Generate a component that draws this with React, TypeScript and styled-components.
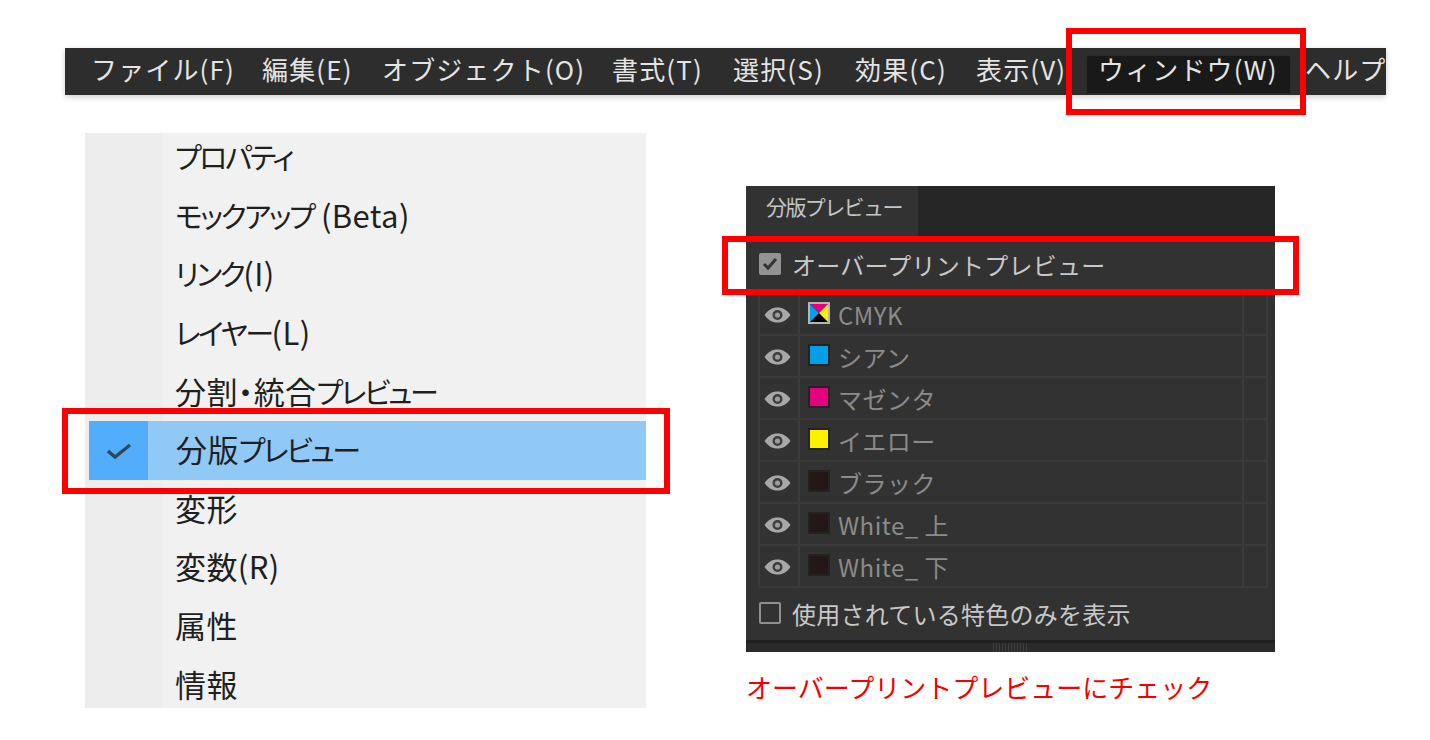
import styled, { createGlobalStyle } from 'styled-components';

const GlobalStyle = createGlobalStyle`
  html, body {
    margin: 0;
    padding: 0;
    background: #ffffff;
  }
  body {
    font-family: "Noto Sans CJK JP", "Noto Sans", sans-serif;
  }
`;

const Page = styled.div`
  width: 1430px;
  height: 740px;
  padding: 48px 44px 0 65px;
  box-sizing: border-box;
  overflow: hidden;
`;

const MenuBar = styled.nav`
  position: relative;
  height: 47px;
  padding-left: 12px;
  background: #2d2d2d;
  box-shadow: 0 2px 6px rgba(0, 0, 0, 0.2);
`;

const MenuBarClip = styled.div`
  display: flex;
  align-items: flex-start;
  padding-top: 7px;
  box-sizing: border-box;
  height: 100%;
  width: 100%;
  overflow: hidden;
`;

const BarItem = styled.div<{ $active?: boolean; $width: number }>`
  flex: none;
  box-sizing: border-box;
  width: ${p => p.$width}px;
  height: 39px;
  line-height: ${p => (p.$active ? 25 : 27)}px;
  padding-left: ${p => (p.$active ? 11 : 14)}px;
  font-size: 26px;
  letter-spacing: 1.15px;
  white-space: nowrap;
  color: #e4e4e4;
  background: ${p => (p.$active ? '#191919' : 'transparent')};
  border: ${p => (p.$active ? '1px solid #2a2a2a' : 'none')};
  border-radius: ${p => (p.$active ? '3px 3px 0 0' : '0')};
`;

const Highlight = styled.div<{ $top: number; $left: number; $width: number; $height: number }>`
  position: absolute;
  top: ${p => p.$top}px;
  left: ${p => p.$left}px;
  width: ${p => p.$width}px;
  height: ${p => p.$height}px;
  box-sizing: border-box;
  border: 6px solid #ff0000;
  pointer-events: none;
`;

const Content = styled.div`
  display: flex;
  align-items: flex-start;
  margin-top: 38px;
  padding-left: 20px;
`;

const DropMenu = styled.ul`
  position: relative;
  flex: none;
  width: 561px;
  height: 575px;
  margin: 0;
  padding: 0;
  list-style: none;
  background: linear-gradient(to right, #ededed 0, #ededed 78px, #f1f1f1 78px);
`;

const DropItem = styled.li<{ $selected?: boolean }>`
  position: relative;
  display: flex;
  align-items: center;
  box-sizing: border-box;
  height: 58.6px;
  margin-left: ${p => (p.$selected ? 4 : 0)}px;
  padding-left: ${p => (p.$selected ? 87 : 90)}px;
  padding-bottom: 4px;
  font-size: 31px;
  font-feature-settings: "palt";
  letter-spacing: 0.4px;
  white-space: pre;
  color: #1f1f1f;
  background: ${p => (p.$selected ? '#90c8f6' : 'transparent')};

  &:first-child {
    margin-top: -4.5px;
  }
`;

const Kana = styled.span`
  font-size: 29px;
  letter-spacing: -2.4px;
`;

const CheckCell = styled.span`
  position: absolute;
  left: 0;
  top: 0;
  bottom: 0;
  width: 59px;
  display: flex;
  align-items: center;
  justify-content: center;
  background: #52aefc;
`;

const RightColumn = styled.div`
  flex: none;
  margin: 53px 0 0 100px;
  width: 529px;
`;

const Panel = styled.section`
  position: relative;
  background: #323232;
  color: #c6c6c6;
`;

const TabStrip = styled.div`
  height: 50px;
  background: #262626;
`;

const Tab = styled.div`
  box-sizing: border-box;
  width: 172px;
  height: 50px;
  padding-left: 20px;
  line-height: 40px;
  font-size: 21px;
  letter-spacing: -1.6px;
  color: #c4c4c4;
  background: #323232;
`;

const OptionRow = styled.label<{ $height: number }>`
  display: flex;
  align-items: center;
  gap: 11px;
  height: ${p => p.$height}px;
  padding-left: 13px;
  padding-bottom: 2px;
  box-sizing: border-box;
  font-size: 24px;
  letter-spacing: 0.25px;
  color: #c8c8c8;
`;

const CheckBox = styled.span<{ $checked?: boolean }>`
  flex: none;
  display: flex;
  align-items: center;
  justify-content: center;
  box-sizing: border-box;
  width: 22px;
  height: 22px;
  border-radius: 2px;
  border: 2px solid ${p => (p.$checked ? '#939393' : '#8f8f8f')};
  background: ${p => (p.$checked ? '#939393' : 'transparent')};
`;

const SeparationTable = styled.div`
  margin: 0 7px 0 12px;
  border: 2px solid #3b3b3b;
  border-top: none;
  border-radius: 0 0 2px 2px;
`;

const SeparationRow = styled.div`
  display: grid;
  grid-template-columns: 40px 1fr 22px;
  height: 42px;
  box-sizing: border-box;
  border-bottom: 2px solid #3b3b3b;

  &:last-child {
    height: 40px;
    border-bottom: none;
  }
`;

const EyeCell = styled.div`
  display: flex;
  align-items: center;
  justify-content: center;
  padding: 2px 3px 0 0;
  border-right: 2px solid #3b3b3b;
`;

const NameCell = styled.div`
  display: flex;
  align-items: center;
  gap: 8px;
  padding-left: 8px;
  font-size: 24px;
  letter-spacing: 0.5px;
  color: #8b8b8b;
  border-right: 2px solid #3b3b3b;
`;

const Swatch = styled.span<{ $color: string }>`
  flex: none;
  box-sizing: border-box;
  width: 22px;
  height: 22px;
  margin-top: -2px;
  border: 2px solid #232323;
  background: ${p => p.$color};
`;

const CmykMark = styled.svg`
  flex: none;
  margin-top: -2px;
`;

const ResizeStrip = styled.div`
  display: flex;
  justify-content: center;
  height: 12px;
  background: #2a2a2a;
  border-top: 3px solid #202020;
  box-sizing: border-box;
`;

const Grip = styled.div`
  width: 36px;
  height: 100%;
  background: repeating-linear-gradient(to right, #3f3f3f 0, #3f3f3f 1px, transparent 1px, transparent 3px);
`;

const Caption = styled.p`
  margin: 15px 0 0;
  font-size: 26px;
  line-height: 40px;
  white-space: nowrap;
  color: #f50000;
`;

const barItems = [
  { label: 'ファイル(F)', width: 171 },
  { label: '編集(E)', width: 120 },
  { label: 'オブジェクト(O)', width: 230 },
  { label: '書式(T)', width: 121 },
  { label: '選択(S)', width: 122 },
  { label: '効果(C)', width: 121 },
  { label: '表示(V)', width: 124 },
  { label: 'ウィンドウ(W)', width: 205, active: true },
  { label: 'ヘルプ', width: 100 },
];

const dropItems = [
  'プロパティ',
  'モックアップ (Beta)',
  'リンク(I)',
  'レイヤー(L)',
  '分割・統合プレビュー',
  '分版プレビュー',
  '変形',
  '変数(R)',
  '属性',
  '情報',
];

const separations = [
  { name: 'CMYK', color: 'cmyk' },
  { name: 'シアン', color: '#009fe8' },
  { name: 'マゼンタ', color: '#e5007f' },
  { name: 'イエロー', color: '#fff000' },
  { name: 'ブラック', color: '#231815' },
  { name: 'White_ 上', color: '#231815' },
  { name: 'White_ 下', color: '#231815' },
];

function EyeIcon() {
  return (
    <svg width="27" height="16" viewBox="0 0 27 16">
      <path d="M0.5 8C4 3 8 0.5 13.5 0.5S23 3 26.5 8C23 13 19 15.5 13.5 15.5S4 13 0.5 8Z" fill="#a8a8a8" />
      <circle cx="13.5" cy="8" r="5" fill="#3c3c3c" />
      <circle cx="13.5" cy="8" r="2.6" fill="#9c9c9c" />
    </svg>
  );
}

function CmykSwatch() {
  return (
    <CmykMark width="22" height="22" viewBox="0 0 22 22">
      <rect width="22" height="22" fill="#b5b5b5" />
      <rect x="2" y="2" width="18" height="18" fill="#000" />
      <polygon points="2,2 20,2 11,11" fill="#e6007f" />
      <polygon points="2,2 11,11 2,20" fill="#00a0e9" />
      <polygon points="20,2 20,20 11,11" fill="#fff100" />
    </CmykMark>
  );
}

// the menu's font sets katakana tighter than kanji and latin
function MenuLabel({ text }: { text: string }) {
  return (
    <>
      {text.split(/([ァ-ヶー]+)/).map((part, i) =>
        i % 2 === 1 ? <Kana key={i}>{part}</Kana> : part
      )}
    </>
  );
}

export default function App() {
  return (
    <>
      <GlobalStyle />
      <Page>
        <MenuBar>
          <MenuBarClip>
            {barItems.map(item => (
              <BarItem key={item.label} $width={item.width} $active={item.active}>
                {item.label}
              </BarItem>
            ))}
          </MenuBarClip>
          <Highlight $top={-20} $left={1001} $width={240} $height={87} />
        </MenuBar>
        <Content>
          <DropMenu>
            {dropItems.map(label => (
              <DropItem key={label} $selected={label === '分版プレビュー'}>
                {label === '分版プレビュー' && (
                  <CheckCell>
                    <svg width="26" height="18" viewBox="0 0 26 18">
                      <path d="M2 9l7 6L24 3" fill="none" stroke="#33475a" strokeWidth="3.4" />
                    </svg>
                  </CheckCell>
                )}
                <span>
                  <MenuLabel text={label} />
                </span>
              </DropItem>
            ))}
            <Highlight $top={275} $left={-23} $width={608} $height={86} />
          </DropMenu>
          <RightColumn>
            <Panel>
              <TabStrip>
                <Tab>分版プレビュー</Tab>
              </TabStrip>
              <OptionRow $height={58}>
                <CheckBox $checked>
                  <svg width="16" height="14" viewBox="0 0 16 14">
                    <path d="M2 7l4 4 8-9" fill="none" stroke="#333" strokeWidth="3" />
                  </svg>
                </CheckBox>
                オーバープリントプレビュー
              </OptionRow>
              <SeparationTable>
                {separations.map(sep => (
                  <SeparationRow key={sep.name}>
                    <EyeCell>
                      <EyeIcon />
                    </EyeCell>
                    <NameCell>
                      {sep.color === 'cmyk' ? <CmykSwatch /> : <Swatch $color={sep.color} />}
                      {sep.name}
                    </NameCell>
                    <div />
                  </SeparationRow>
                ))}
              </SeparationTable>
              <OptionRow $height={52}>
                <CheckBox />
                使用されている特色のみを表示
              </OptionRow>
              <ResizeStrip>
                <Grip />
              </ResizeStrip>
              <Highlight $top={50} $left={-24} $width={577} $height={59} />
            </Panel>
            <Caption>オーバープリントプレビューにチェック</Caption>
          </RightColumn>
        </Content>
      </Page>
    </>
  );
}
